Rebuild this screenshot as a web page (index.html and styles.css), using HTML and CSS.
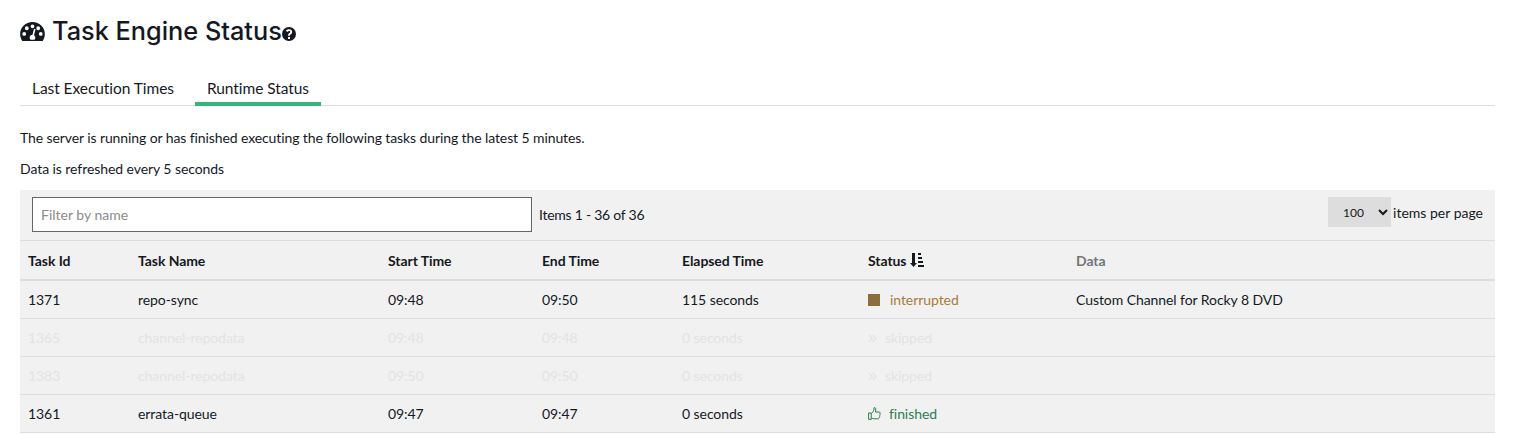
FILE: index.html
```html
<!DOCTYPE html>
<html lang="en">
<head>
<meta charset="utf-8">
<title>Task Engine Status</title>
<link rel="stylesheet" href="styles.css">
</head>
<body>
<main class="page">
  <h1 class="title">
    <svg class="gauge" viewBox="0 0 26 20" aria-hidden="true"><path fill-rule="evenodd" d="M13 0C5.8 0 0 5.6 0 12.6c0 2.700.9 5.300 2.300 7.400h21.400c1.400-2.100 2.300-4.700 2.300-7.400C26 5.600 20.200 0 13 0zM13 2.600a2 2 0 1 1 0 4 2 2 0 0 1 0-4zM7 4.600a2 2 0 1 1 0 4 2 2 0 0 1 0-4zM19 4.600a2 2 0 1 1 0 4 2 2 0 0 1 0-4zM4.300 10.500a2 2 0 1 1 0 4 2 2 0 0 1 0-4zM21.700 10.500a2 2 0 1 1 0 4 2 2 0 0 1 0-4zM14.600 7.200l1.600.5-1.600 6.300c.8.5 1.400 1.400 1.400 2.400 0 .9-.4 1.700-1 2.200h-4c-.6-.5-1-1.300-1-2.200 0-1.700 1.300-3 3-3z"/></svg>
    <span>Task Engine Status</span>
    <svg class="help" viewBox="0 0 14 14" aria-hidden="true"><path fill-rule="evenodd" d="M7 0a7 7 0 1 0 0 14A7 7 0 0 0 7 0zM6 10h2v2H6zM7 2.300c1.900 0 3.200 1.100 3.200 2.700 0 1.200-.7 1.800-1.400 2.300-.6.4-.8.6-.8 1.200v.3H6.100v-.5c0-1.100.5-1.700 1.200-2.200.6-.4 1-.7 1-1.200 0-.6-.5-.9-1.200-.9-.8 0-1.300.4-1.700 1L3.900 3.700C4.600 2.900 5.600 2.300 7 2.300z"/></svg>
  </h1>

  <nav class="tabs">
    <a class="tab">Last Execution Times</a>
    <a class="tab tab-active">Runtime Status</a>
  </nav>

  <p class="note note-first">The server is running or has finished executing the following tasks during the latest 5 minutes.</p>
  <p class="note note-second">Data is refreshed every 5 seconds</p>

  <section class="panel">
    <div class="toolbar">
      <input class="filter" type="text" placeholder="Filter by name">
      <span class="count">Items 1 - 36 of 36</span>
      <span class="per-page">
        <select class="size"><option>100</option></select>
        <span>items per page</span>
      </span>
    </div>
    <table class="grid">
      <colgroup>
        <col class="c1"><col class="c2"><col class="c3"><col class="c4"><col class="c5"><col class="c6"><col>
      </colgroup>
      <thead>
        <tr>
          <th>Task Id</th><th>Task Name</th><th>Start Time</th><th>End Time</th><th>Elapsed Time</th>
          <th>Status <svg class="sort" viewBox="0 0 14 14" aria-hidden="true"><path d="M2 0h3v10h2L3.500 14 0 10h2zM8 0h3v2H8zM8 4h4v2H8zM8 8h5v2H8zM8 12h6v2H8z"/></svg></th>
          <th class="muted-head">Data</th>
        </tr>
      </thead>
      <tbody>
        <tr>
          <td>1371</td><td>repo-sync</td><td>09:48</td><td>09:50</td><td>115 seconds</td>
          <td class="interrupted"><span class="square"></span>interrupted</td>
          <td>Custom Channel for Rocky 8 DVD</td>
        </tr>
        <tr class="dim">
          <td>1365</td><td>channel-repodata</td><td>09:48</td><td>09:48</td><td>0 seconds</td>
          <td><svg class="skip" viewBox="0 0 9 9" aria-hidden="true"><path d="M1 1l3.200 3.500L1 8M4.800 1L8 4.500 4.800 8"/></svg>skipped</td>
          <td></td>
        </tr>
        <tr class="dim">
          <td>1383</td><td>channel-repodata</td><td>09:50</td><td>09:50</td><td>0 seconds</td>
          <td><svg class="skip" viewBox="0 0 9 9" aria-hidden="true"><path d="M1 1l3.200 3.500L1 8M4.800 1L8 4.500 4.800 8"/></svg>skipped</td>
          <td></td>
        </tr>
        <tr>
          <td>1361</td><td>errata-queue</td><td>09:47</td><td>09:47</td><td>0 seconds</td>
          <td class="finished"><svg class="thumb" viewBox="0 0 13 13" aria-hidden="true"><path d="M.6 6h2.600v6.400H.6zM3.200 6.500c1.600-.9 2.800-2.600 3-5.900 1.500-.2 2 1.400 1.200 4.400h3.700c1 0 1.300 1 .8 1.600.5.600.4 1.400-.2 1.800.3.600.1 1.300-.5 1.600.2 1-.4 1.800-1.400 1.800H6.200c-1 0-2-.5-3-.8"/></svg>finished</td>
          <td></td>
        </tr>
      </tbody>
    </table>
  </section>
</main>
</body>
</html>
```

FILE: styles.css
```css
* { box-sizing: border-box; }
html, body { margin: 0; height: 434px; overflow: hidden; background: #fff; }
body { font-family: Lato, "Liberation Sans", sans-serif; font-size: 14px; letter-spacing: -0.07px; color: #15191f; }
.page { padding: 16px 32px 0 20px; }
.title { display: flex; align-items: center; margin: 0; height: 30px; font-family: Inter, "Open Sans", sans-serif; font-size: 25.300px; font-weight: 500; letter-spacing: 0; line-height: 30px; }
.gauge { width: 25px; height: 19px; margin-right: 7px; fill: #15191f; }
.help { width: 14px; height: 14px; margin-top: 5px; fill: #15191f; }
.tabs { display: flex; gap: 9px; height: 31px; margin-top: 29px; border-bottom: 1px solid #ddd; }
.tab { height: 31px; padding: 0 12px; font-size: 15.500px; letter-spacing: -0.06px; line-height: 27px; }
.tab-active { border-bottom: 4px solid #33b679; }
.note { margin: 0; line-height: 20px; }
.note-first { margin-top: 22px; letter-spacing: -0.1px; }
.note-second { margin-top: 11px; }
.panel { margin-top: 11px; background: #f1f1f1; }
.toolbar { display: flex; align-items: center; height: 51px; padding: 0 12px 2px; border-bottom: 1px solid #ddd; }
.filter { width: 500px; height: 35px; padding: 0 8px; border: 1px solid #666; border-radius: 0; background: #fff; font: 14px Lato, sans-serif; color: #15191f; outline: 0; }
.filter::placeholder { color: #8b8b8b; opacity: 1; }
.count { margin-left: 7px; letter-spacing: -0.25px; }
.per-page { display: flex; align-items: center; gap: 2px; margin-left: auto; margin-bottom: 4px; letter-spacing: 0; }
.size { width: 63px; height: 30px; padding-left: 11px; border: 0; border-radius: 0; background-color: #ddd; font: 12px Lato, sans-serif; color: #15191f; }
.grid { width: 100%; border-collapse: separate; border-spacing: 0; table-layout: fixed; }
.c1 { width: 110px; }
.c2 { width: 250px; }
.c3 { width: 154px; }
.c4 { width: 140px; }
.c5 { width: 186px; }
.c6 { width: 208px; }
th { height: 40px; padding: 0 8px; border-bottom: 2px solid #ddd; font-weight: 700; text-align: left; }
td { height: 38px; padding: 0 8px; border-bottom: 1px solid #ddd; }
.muted-head { color: #757575; }
.sort { width: 14px; height: 14px; vertical-align: -1px; fill: #15191f; }
.square { display: inline-block; width: 12px; height: 12px; margin-right: 10px; background: #8c6d3b; vertical-align: -1px; }
.interrupted { color: #a67c3a; }
.finished { color: #2f7d4f; }
.thumb { width: 13px; height: 13px; margin-right: 8px; vertical-align: -1px; fill: none; stroke: #2f7d4f; stroke-width: 1; }
.skip { width: 9px; height: 9px; margin-right: 8px; fill: none; stroke: currentColor; stroke-width: 1.300; }
.dim td { color: #e3e3e3; }
```
